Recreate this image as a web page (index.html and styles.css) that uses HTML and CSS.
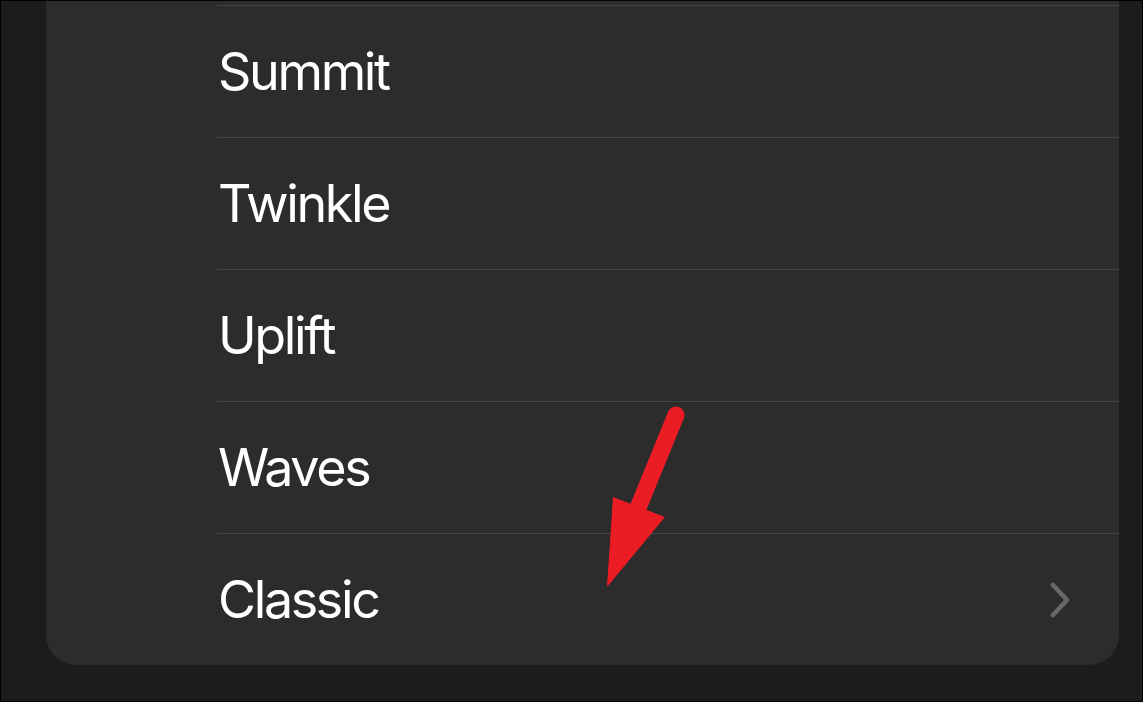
FILE: index.html
```html
<!DOCTYPE html>
<html lang="en">
<head>
<meta charset="utf-8">
<title>Sounds</title>
<link rel="stylesheet" href="styles.css">
</head>
<body>
<div class="card">
  <div class="row"><span class="label">Summit</span></div>
  <div class="row"><span class="label">Twinkle</span></div>
  <div class="row"><span class="label">Uplift</span></div>
  <div class="row"><span class="label">Waves</span></div>
  <div class="row"><span class="label">Classic</span>
    <svg class="chevron" width="24" height="36" viewBox="0 0 24 36"><path d="M5 3 L19 18 L5 33" fill="none" stroke="#68686c" stroke-width="4.5" stroke-linecap="round" stroke-linejoin="round"/></svg>
  </div>
</div>
<svg class="arrow" width="1143" height="702" viewBox="0 0 1143 702">
  <line x1="676" y1="415" x2="638" y2="508" stroke="#ec1c24" stroke-width="17" stroke-linecap="round"/>
  <polygon points="613,497 665,517 607,587" fill="#ec1c24"/>
</svg>
</body>
</html>
```
FILE: styles.css
```css
html, body {
  margin: 0;
  padding: 0;
}
body {
  position: relative;
  box-sizing: border-box;
  width: 1143px;
  height: 702px;
  border: 1px solid #000;
  background: #1c1c1c;
  overflow: hidden;
  font-family: "Inter", "Liberation Sans", Arial, sans-serif;
}
.card {
  margin: 0 23px 0 45px;
  padding-top: 4px;
  background: #2c2c2c;
  border-radius: 0 0 30px 30px;
}
.row {
  margin-left: 171px;
  height: 131px;
  border-top: 1px solid #444;
  display: flex;
  align-items: center;
  justify-content: space-between;
  padding-right: 47px;
}
.label {
  color: #fff;
  font-size: 52px;
  letter-spacing: -0.045em;
  line-height: 1;
  padding-left: 1px;
  padding-top: 1px;
}
.chevron {
  display: block;
}
.arrow {
  position: absolute;
  left: -1px;
  top: -1px;
}
```
